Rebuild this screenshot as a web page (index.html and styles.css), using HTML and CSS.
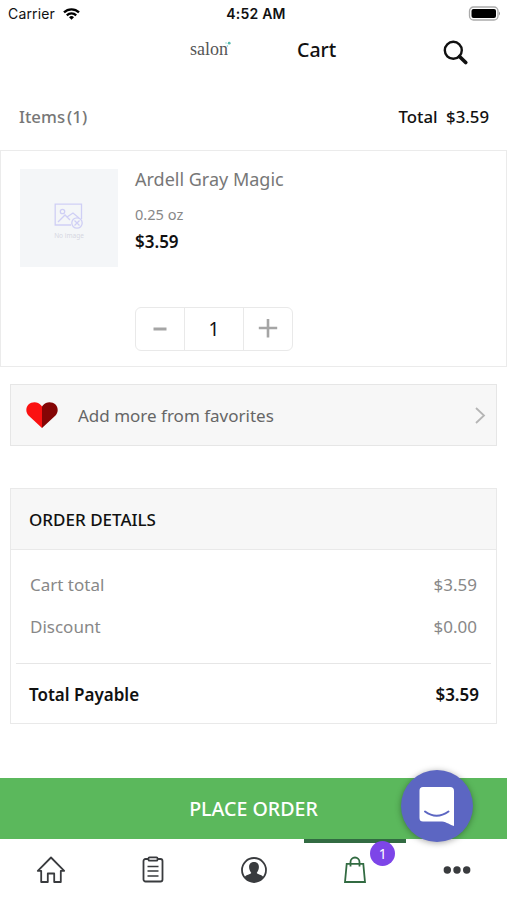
FILE: index.html
```html
<!DOCTYPE html>
<html lang="en">
<head>
<meta charset="utf-8">
<title>Cart</title>
<link rel="stylesheet" href="styles.css">
</head>
<body>
<div class="app">
  <div class="status">
    <div class="carrier"><span>Carrier</span>
      <svg width="17" height="12" viewBox="0 0 17 12" fill="none" stroke="#000" stroke-width="2.3"><path d="M1 4.4a10.7 10.7 0 0 1 15 0M3.8 7.3a6.8 6.8 0 0 1 9.4 0"/><path d="M8.5 11.8L6 9.3a3.6 3.6 0 0 1 5 0z" fill="#000" stroke="none"/></svg>
    </div>
    <span class="time">4:52 AM</span>
    <svg class="battery" width="34" height="15" viewBox="0 0 34 15"><rect x="2.500" y="1" width="28.5" height="13" rx="4" fill="#fff" stroke="#aaa" stroke-width="1.3"/><rect x="4.500" y="3" width="24.5" height="9" rx="2"/><path d="M32 5.5q2 2 0 4z" fill="#999"/></svg>
  </div>
  <header class="header">
    <div class="logo">salon<svg width="8" height="8" viewBox="0 0 8 8"><circle cx="5.2" cy="2.2" r="1.4" fill="#54b8ad"/><circle cx="2" cy="2" r=".7" fill="#8dcfc8"/><circle cx="3.4" cy="5" r=".8" fill="#8dcfc8"/></svg></div>
    <h1 class="title">Cart</h1>
    <svg class="search" width="26" height="26" viewBox="0 0 26 26" fill="none" stroke="#111"><circle cx="10.3" cy="10.3" r="8.5" stroke-width="2.4"/><path d="M16.500 16.500l6.200 6" stroke-width="3.800" stroke-linecap="round"/></svg>
  </header>
  <div class="summary"><span class="items">Items<span class="count">(1)</span></span><span class="total">Total&ensp;$3.59</span></div>
  <section class="product">
    <div class="thumb">
      <svg width="30" height="26" viewBox="0 0 30 26" fill="none" stroke="#cfcff5" stroke-width="1.3"><path d="M17 22H1.200V1.200h26.300V16"/><circle cx="8.500" cy="8.500" r="2.200"/><path d="M4 19l7-7 5 5M13 14l6-4 6 5"/><circle cx="23" cy="20" r="5.200"/><path d="M20.500 17.500l5 5m0-5l-5 5"/></svg>
      <span>No image</span>
    </div>
    <div class="info">
      <div class="name">Ardell Gray Magic</div>
      <div class="size">0.25 oz</div>
      <div class="price">$3.59</div>
      <div class="stepper">
        <span class="step"><svg width="14" height="20" viewBox="0 0 14 20"><path d="M.5 10h13" stroke="#a5a5a5" stroke-width="3"/></svg></span>
        <span class="qty">1</span>
        <span class="step"><svg width="20" height="20" viewBox="0 0 20 20"><path d="M.8 9h18.400M10 0v18.400" stroke="#a5a5a5" stroke-width="2.600"/></svg></span>
      </div>
    </div>
  </section>
  <div class="favorites">
    <svg class="heart" width="32" height="26" viewBox="0 0 32 26"><path d="M16 26L2.500 13.500C-.5 10.500-.3 5.500 2.500 2.600 6-.8 12-.6 15 3.300L16 4.500z" fill="#fb1111"/><path d="M16 26l13.500-12.500c3-3 2.800-8 0-10.900C26-.8 20-.6 17 3.300L16 4.500z" fill="#850505"/></svg>
    <span class="fav-text">Add more from favorites</span>
    <svg width="11" height="17" viewBox="0 0 11 17"><path d="M1 1l8 7.500L1 16" fill="none" stroke="#b5b5b5" stroke-width="1.800"/></svg>
  </div>
  <section class="order">
    <h2 class="order-title">ORDER DETAILS</h2>
    <div class="lines">
      <div class="line"><span>Cart total</span><span>$3.59</span></div>
      <div class="line"><span>Discount</span><span>$0.00</span></div>
    </div>
    <div class="payable"><span>Total Payable</span><span>$3.59</span></div>
  </section>
  <div class="place">PLACE ORDER</div>
  <nav class="tabs">
    <div class="tab"><svg width="30" height="28" viewBox="0 0 30 28" fill="none" stroke="#393b3e" stroke-width="1.800" stroke-linejoin="round"><path d="M15 1.500L1.800 14.800h3.400V26h6.600v-8.500h6.400V26h6.600V14.800h3.400z"/></svg></div>
    <div class="tab"><svg width="22" height="28" viewBox="0 0 22 28" fill="none" stroke="#393b3e" stroke-width="1.800"><rect x="1.500" y="3" width="19" height="22.500" rx="2"/><rect x="6.500" y="1.300" width="9" height="3.400" rx="1" fill="#fff"/><path d="M5.500 10.500h11M5.500 15h11M5.500 20h11" stroke-width="1.300"/></svg></div>
    <div class="tab"><svg width="28" height="28" viewBox="0 0 28 28"><circle cx="14" cy="14" r="12" fill="#fff" stroke="#393b3e" stroke-width="1.800"/><path d="M4.500 21c2-2.500 5.500-2.300 6.800-4C8 13 8 6 14 6s6 7 2.700 11c1.300 1.700 4.800 1.500 6.800 4C19 27.500 9 27.500 4.500 21z" fill="#393b3e"/></svg></div>
    <div class="tab active"><svg width="24" height="28" viewBox="0 0 24 28" fill="none" stroke="#326b42" stroke-width="1.800"><path d="M3.700 7.800h16.600L22 26H2zM7.500 10.500V6a4.500 4.500 0 0 1 9 0v4.500"/></svg><span class="badge">1</span></div>
    <div class="tab"><svg width="28" height="28" viewBox="0 0 28 28" fill="#393b3e"><circle cx="4.300" cy="14" r="3.700"/><circle cx="14" cy="14" r="3.700"/><circle cx="23.700" cy="14" r="3.700"/></svg></div>
  </nav>
  <div class="chat"><svg width="36" height="40" viewBox="0 0 36 40"><path d="M4 1h27a4 4 0 0 1 4 4v35c-4-1-7-4-12-4.500H4a3.500 3.500 0 0 1-3.500-3.500V4.500A3.500 3.500 0 0 1 4 1z" fill="#fff"/><path d="M6 25.500q11.500 8.500 23.500 0" fill="none" stroke="#5c66c2" stroke-width="2" stroke-linecap="round"/></svg></div>
</div>
</body>
</html>
```
FILE: styles.css
```css
* { box-sizing: border-box; }
body { margin: 0; background: #fff; font-family: "Noto Sans", sans-serif; color: #111; }
svg { display: block; flex: none; }
.app { position: relative; width: 507px; height: 900px; display: flex; flex-direction: column; overflow: hidden; }
.status { height: 27px; flex: none; display: grid; grid-template-columns: 1fr auto 1fr; align-items: center; padding: 0 6px 0 8px; font: 14px/27px Inter, sans-serif; }
.carrier { display: flex; gap: 8px; align-items: center; letter-spacing: .15px; }
.time { font-weight: 600; letter-spacing: .2px; margin-left: 3px; }
.battery { justify-self: end; }
.header { height: 63px; flex: none; display: flex; align-items: flex-start; padding: 8px 38px 0 190px; }
.logo { width: 107px; display: flex; padding-top: 4px; font: 18px/20px "Liberation Serif", serif; color: #555; }
.logo svg { margin: 2px 0 0 -4px; }
.title { margin: 0; font-size: 19.5px; line-height: 30px; font-weight: 550; }
.search { margin: 5px 0 0 auto; }
.summary { height: 60px; flex: none; display: flex; justify-content: space-between; padding: 0 18px 0 19px; font-size: 16.8px; line-height: 53px; }
.items { color: #777; font-weight: 500; }
.count { margin-left: 2px; }
.total { font-weight: 550; }
.product { height: 217px; flex: none; display: flex; gap: 17px; border: 1px solid #ebebeb; padding: 18px 18px 18px 19px; }
.thumb { width: 98px; height: 98px; background: #f4f6f8; display: flex; flex-direction: column; align-items: center; padding-top: 34px; font-size: 6.5px; line-height: 14px; color: #d6d7e2; }
.name { margin-top: -1px; font-size: 18px; line-height: 22px; color: #777; }
.size { margin-top: 14px; font-size: 14.6px; line-height: 20px; color: #888; }
.price { margin-top: 7px; font-size: 17px; line-height: 22px; font-weight: 600; }
.stepper { margin-top: 54px; width: 158px; height: 44px; display: flex; border: 1px solid #e9e9e9; border-radius: 6px; }
.step { width: 48px; display: flex; align-items: center; justify-content: center; }
.qty { flex: 1; text-align: center; font-size: 19px; line-height: 42px; border: solid #e9e9e9; border-width: 0 1px; }
.favorites { height: 62px; flex: none; margin: 17px 10px 0; display: flex; align-items: center; padding: 0 10px 0 15px; background: #f7f7f7; border: 1px solid #e6e6e6; }
.fav-text { flex: 1; margin-left: 20px; font-size: 17px; color: #666; }
.order { height: 236px; flex: none; margin: 42px 10px 0; border: 1px solid #e9e9e9; }
.order-title { margin: 0; height: 61px; padding-left: 18px; font-size: 17px; line-height: 61px; font-weight: 550; background: #f7f7f7; border-bottom: 1px solid #e9e9e9; }
.lines { height: 114px; margin: 0 5px; padding: 14px 14px 0; border-bottom: 1px solid #e6e6e6; }
.line { display: flex; justify-content: space-between; font-size: 17px; line-height: 42px; color: #888; }
.payable { display: flex; justify-content: space-between; padding: 0 17px 0 18px; font-size: 17px; line-height: 61px; font-weight: 600; }
.place { height: 61px; flex: none; margin-top: 54px; background: #5bb85c; color: #fff; text-align: center; font-size: 19.6px; line-height: 61px; font-weight: 500; }
.tabs { height: 61px; display: grid; grid-template-columns: repeat(5, 1fr); }
.tab { position: relative; display: flex; justify-content: center; padding: 17px 0 0 1px; }
.active { border-top: 4px solid #326b42; padding: 13px 0 0; }
.badge { position: absolute; left: 66px; top: -2px; width: 25px; height: 25px; border-radius: 50%; background: #7d45e8; color: #fff; text-align: center; font-size: 14px; line-height: 25px; }
.chat { position: absolute; left: 401px; top: 770px; width: 72px; height: 72px; border-radius: 50%; background: #5c66c2; display: flex; padding: 16px 0 0 18px; box-shadow: 0 1px 6px rgba(0,0,0,.35); }
```
